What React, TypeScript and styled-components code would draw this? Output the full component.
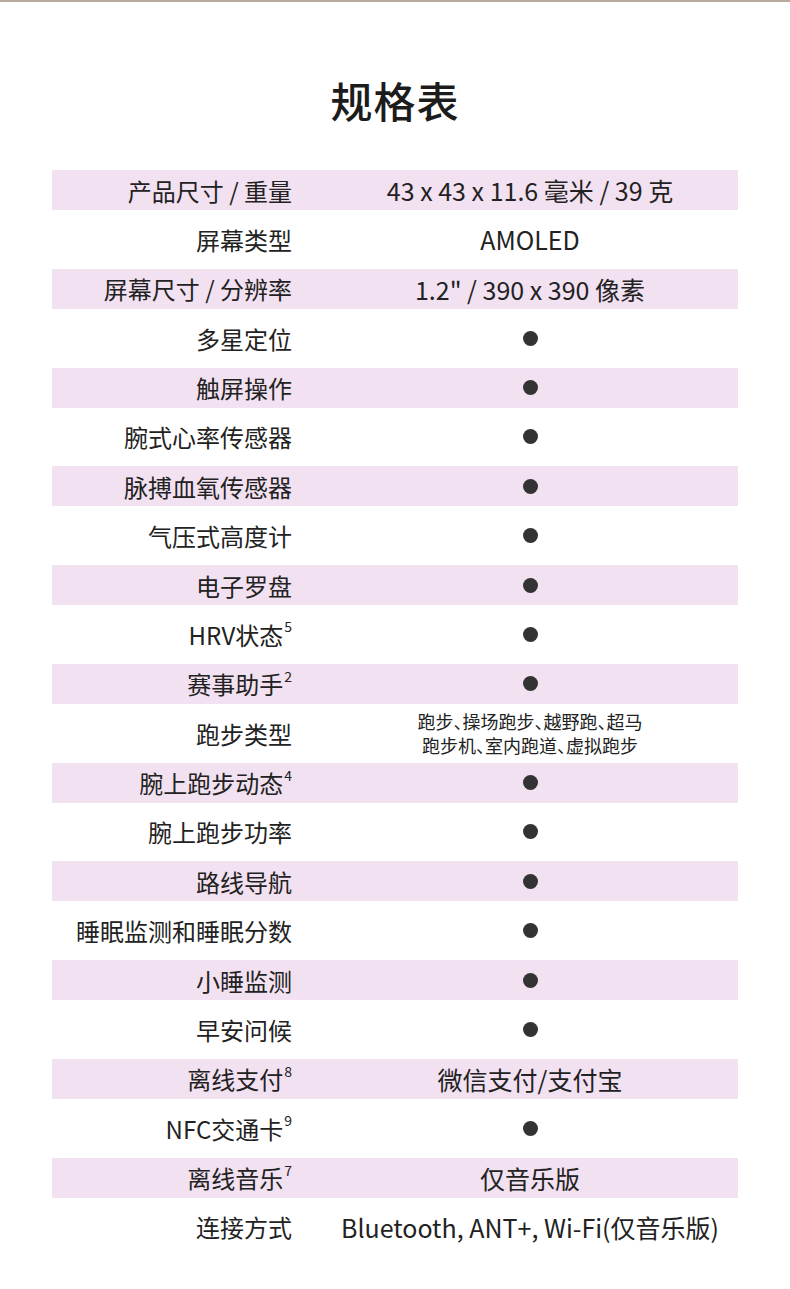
import * as React from "react";
import styled, { createGlobalStyle } from "styled-components";

const GlobalStyle = createGlobalStyle`
  html, body {
    margin: 0;
    padding: 0;
    background: #ffffff;
  }
  body {
    font-family: "Noto Sans CJK SC", "Noto Sans", sans-serif;
    color: #222222;
  }
`;

const Page = styled.div`
  width: 790px;
  min-height: 1289px;
  box-sizing: border-box;
  border-top: 2px solid #b8aa9c;
  padding: 73px 52px 40px;
`;

const Title = styled.h1`
  margin: 0 0 45px;
  font-size: 42px;
  line-height: 50px;
  font-weight: 500;
  text-align: center;
  letter-spacing: 1px;
  color: #1c1c1c;
`;

const Table = styled.div`
  display: flex;
  flex-direction: column;
  gap: 9.38px;
`;

const Row = styled.div<{ $shaded: boolean }>`
  display: grid;
  grid-template-columns: 270px 1fr;
  grid-template-rows: 40px;
  height: 40px;
  background: ${(p) => (p.$shaded ? "#f2e1f1" : "transparent")};
`;

const Label = styled.div`
  display: flex;
  align-items: center;
  justify-content: flex-end;
  padding-right: 30px;
  font-size: 24px;
  white-space: nowrap;
`;

const Value = styled.div<{ $small?: boolean }>`
  display: flex;
  align-items: center;
  justify-content: center;
  text-align: center;
  font-size: ${(p) => (p.$small ? "18px" : "25px")};
  line-height: ${(p) => (p.$small ? "24px" : "40px")};
  font-feature-settings: ${(p) => (p.$small ? '"halt"' : "normal")};
  white-space: nowrap;
`;

const Sup = styled.span`
  font-size: 14px;
  position: relative;
  top: -8px;
  margin-left: 1px;
`;

const Dot = styled.span`
  display: block;
  width: 15px;
  height: 15px;
  border-radius: 50%;
  background: #333333;
`;

type Spec = {
  label: string;
  note?: string;
  value?: React.ReactNode;
  small?: boolean;
};

const specs: Spec[] = [
  { label: "产品尺寸 / 重量", value: "43 x 43 x 11.6 毫米 / 39 克" },
  { label: "屏幕类型", value: "AMOLED" },
  { label: "屏幕尺寸 / 分辨率", value: '1.2" / 390 x 390 像素' },
  { label: "多星定位" },
  { label: "触屏操作" },
  { label: "腕式心率传感器" },
  { label: "脉搏血氧传感器" },
  { label: "气压式高度计" },
  { label: "电子罗盘" },
  { label: "HRV状态", note: "5" },
  { label: "赛事助手", note: "2" },
  {
    label: "跑步类型",
    value: (
      <div>
        跑步、操场跑步、越野跑、超马
        <br />
        跑步机、室内跑道、虚拟跑步
      </div>
    ),
    small: true,
  },
  { label: "腕上跑步动态", note: "4" },
  { label: "腕上跑步功率" },
  { label: "路线导航" },
  { label: "睡眠监测和睡眠分数" },
  { label: "小睡监测" },
  { label: "早安问候" },
  { label: "离线支付", note: "8", value: "微信支付/支付宝" },
  { label: "NFC交通卡", note: "9" },
  { label: "离线音乐", note: "7", value: "仅音乐版" },
  { label: "连接方式", value: "Bluetooth, ANT+, Wi-Fi(仅音乐版)" },
];

export default function App() {
  return (
    <>
      <GlobalStyle />
      <Page>
        <Title>规格表</Title>
        <Table>
          {specs.map((s, i) => (
            <Row key={s.label} $shaded={i % 2 === 0}>
              <Label>
                {s.label}
                {s.note && <Sup>{s.note}</Sup>}
              </Label>
              <Value $small={s.small}>{s.value ?? <Dot />}</Value>
            </Row>
          ))}
        </Table>
      </Page>
    </>
  );
}
